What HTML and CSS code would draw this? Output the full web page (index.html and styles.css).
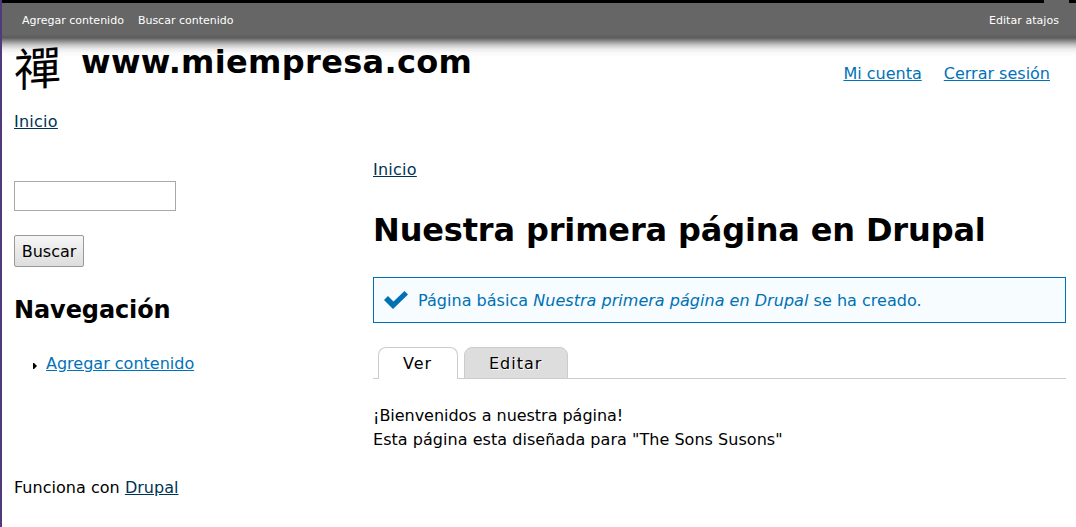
FILE: index.html
```
<!DOCTYPE html>
<html lang="es">
<head>
<meta charset="utf-8">
<title>Nuestra primera página en Drupal</title>
<link rel="stylesheet" href="styles.css">
</head>
<body>
<div class="toolbar-edge"><span class="toolbar-notch"></span></div>
<nav class="shortcuts">
  <a>Agregar contenido</a>
  <a>Buscar contenido</a>
  <a class="edit-shortcuts">Editar atajos</a>
</nav>
<header class="header">
  <span class="logo">禪</span>
  <span class="site-name">www.miempresa.com</span>
  <nav class="user-menu"><a class="link account">Mi cuenta</a><a class="link logout">Cerrar sesión</a></nav>
</header>
<nav class="main-menu"><a class="dark-link inicio">Inicio</a></nav>
<div class="columns">
  <aside class="sidebar">
    <input class="search" type="text" aria-label="Buscar">
    <button class="submit">Buscar</button>
    <h2 class="block-title">Navegación</h2>
    <div class="menu-item">
      <svg class="bullet" width="4" height="6" viewBox="0 0 4 6"><path d="M0 0h1l3 3-3 3H0z"/></svg>
      <a class="link add-link">Agregar contenido</a>
    </div>
  </aside>
  <main class="content">
    <div class="breadcrumb"><a class="dark-link inicio">Inicio</a></div>
    <h1 class="page-title">Nuestra primera página en Drupal</h1>
    <div class="status">
      <svg class="check" width="24" height="20" viewBox="0 0 24 20"><path fill="#0071b3" d="M0 10l4-4 5.500 5.500L20.500 1l3.500 3.500L9 19z"/></svg>
      <span class="status-text">Página básica <em>Nuestra primera página en Drupal</em> se ha creado.</span>
    </div>
    <div class="tabs"><a class="tab active">Ver</a><a class="tab edit">Editar</a></div>
    <div class="body-text"><div class="welcome">¡Bienvenidos a nuestra página!</div><div class="designed">Esta página esta diseñada para "The Sons Susons"</div></div>
  </main>
</div>
<footer class="footer">Funciona con <a class="dark-link">Drupal</a></footer>
</body>
</html>
```
FILE: styles.css
```
* { box-sizing: border-box; }
body {
  margin: 0;
  height: 527px;
  overflow: hidden;
  background: #fff;
  border-left: 2px solid #513a7b;
  color: #000;
  font: 16px/24px Verdana, "DejaVu Sans", sans-serif;
  white-space: nowrap;
}
.toolbar-edge { height: 3px; background: #000; display: flex; justify-content: flex-end; padding-right: 7px; }
.toolbar-notch { width: 25px; height: 3px; background: #666; }
.shortcuts {
  height: 35px;
  padding: 0 17px 0 20px;
  display: flex;
  align-items: center;
  gap: 14px;
  background: linear-gradient(#666 31px, #5c5c5c);
  color: #fff;
  font-size: 11px;
}
.edit-shortcuts { margin-left: auto; letter-spacing: 0.05px; }
.header {
  display: flex; align-items: flex-start;
  height: 72px; padding: 0 26px 0 12px;
  background: linear-gradient(#606060, #8c8c8c 3px, #c6c6c6 7px, #ebebeb 11px, #fafafa 15px, #fff 19px);
}
.logo {
  width: 48px; margin-top: 4px;
  font: 400 47px/48px "Noto Sans CJK TC", sans-serif;
  transform: skewY(-4deg) scaleY(.97);
}
.site-name { margin: 4px 0 0 19px; font-size: 32px; line-height: 40px; font-weight: bold; letter-spacing: 0.33px; }
.user-menu { display: flex; gap: 22px; margin: 24px 0 0 auto; }
.link { color: #0072b9; text-decoration: underline; }
.dark-link { color: #003353; text-decoration: underline; }
.inicio { letter-spacing: 0.25px; }
.main-menu { height: 48px; padding-left: 12px; }
.columns { display: flex; height: 318px; padding: 0 10px 0 12px; }
.sidebar { width: 359px; padding-top: 23px; display: flex; flex-direction: column; align-items: flex-start; }
.search { width: 162px; height: 30px; border: 1px solid #a9a9a9; margin: 0; padding: 0; }
.submit {
  width: 70px; height: 32px; margin: 24px 0 0; padding: 2px 0 0;
  border: 1px solid #999; border-radius: 2px;
  background: linear-gradient(#f6f6f6, #ddd);
  color: #000; font: inherit;
}
.block-title { margin: 27px 0 0; font-size: 24px; line-height: 32px; letter-spacing: -0.1px; }
.menu-item { display: flex; align-items: center; gap: 9px; margin-top: 26px; padding-left: 19px; }
.bullet { margin-top: 3px; }
.content { flex: 1; }
.page-title { margin: 24px 0 0; font-size: 32px; line-height: 48px; letter-spacing: -0.15px; }
.status {
  display: flex; align-items: center; height: 46px; margin-top: 23px; padding-left: 10px; gap: 10px;
  border: 1px solid #0071b3; background: #f6fcff; color: #0071b3;
}
.status-text { padding-top: 2px; letter-spacing: 0.03px; }
.tabs { display: flex; gap: 6px; height: 32px; margin-top: 24px; padding-left: 5px; background: linear-gradient(#ccc, #ccc) bottom / 100% 1px no-repeat; }
.tab { height: 32px; line-height: 32px; width: 80px; padding-left: 24px; border: 1px solid #ccc; border-bottom: 0; border-radius: 8px 8px 0 0; background: #fff; letter-spacing: 1px; text-shadow: 1px 1px 0 #fff; }
.edit { width: 104px; background: #ddd; border-bottom: 1px solid #ccc; }
.body-text { margin-top: 25px; }
.welcome { letter-spacing: -0.03px; }
.designed { letter-spacing: 0.04px; }
.footer { padding-left: 12px; letter-spacing: 0.03px; }
```
